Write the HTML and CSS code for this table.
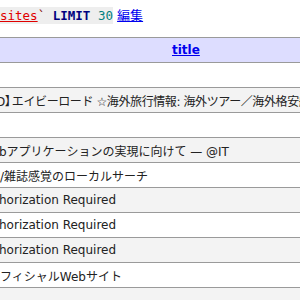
FILE: index.html
```html
<!DOCTYPE html>
<html lang="ja">
<head>
<meta charset="utf-8">
<title>sites</title>
<link rel="stylesheet" href="styles.css">
</head>
<body>
<div class="page">
  <p class="sql"><code class="code"><a class="tbl-name" href="#">sites</a><span class="tick">`</span> <span class="kw">LIMIT</span> <span class="num">30</span></code> <a class="edit" href="#">編集</a></p>
  <div class="grid">
    <div class="row head"><a class="col" href="#">title</a></div>
    <div class="row odd"><span class="cell"></span></div>
    <div class="row even"><span class="cell cut-d">D<span class="bracket">】</span>エイビーロード ☆海外旅行情報: 海外ツアー／海外格安航空券</span></div>
    <div class="row odd"><span class="cell"></span></div>
    <div class="row even"><span class="cell cut-b">bアプリケーションの実現に向けて — @IT</span></div>
    <div class="row odd"><span class="cell">/雑誌感覚のローカルサーチ</span></div>
    <div class="row even"><span class="cell cut-h">horization Required</span></div>
    <div class="row odd"><span class="cell cut-h">horization Required</span></div>
    <div class="row even"><span class="cell cut-h">horization Required</span></div>
    <div class="row odd"><span class="cell cut-f">フィシャルWebサイト</span></div>
    <div class="row even"><span class="cell"></span></div>
  </div>
</div>
</body>
</html>
```
FILE: styles.css
```css
html, body {
  margin: 0;
  padding: 0;
  background: #fff;
}
body {
  font-family: "DejaVu Sans", "Noto Sans CJK JP", sans-serif;
  font-size: 12px;
  color: #222;
  width: 300px;
  height: 300px;
  overflow: hidden;
}
.page {
  padding-top: 8px;
}
.sql {
  margin: 0;
  height: 15px;
  line-height: 15px;
  white-space: nowrap;
  font-size: 13px;
}
.code {
  background: #eeeeee;
  font-family: "DejaVu Sans Mono", "Noto Sans CJK JP", monospace;
  font-size: 12.5px;
  padding: 1px 0;
}
.tbl-name {
  color: #e00000;
  text-decoration: underline;
}
.tick {
  color: #800000;
}
.kw {
  color: #000080;
  font-weight: bold;
}
.num {
  color: #008080;
}
.edit {
  color: #0000ee;
  text-decoration: underline;
}
.grid {
  margin-top: 14px;
}
.row {
  display: flex;
  align-items: center;
  height: 24px;
  border-bottom: 1px solid #9a9a9a;
  white-space: nowrap;
  overflow: hidden;
}
.head {
  border-top: 1px solid #9a9a9a;
  background: #ddddff;
  padding-left: 172px;
}
.col {
  color: #0000ee;
  font-weight: bold;
  text-decoration: underline;
}
.odd {
  background: #ffffff;
}
.even {
  background: #f3f3f3;
}
.cell {
  display: block;
}
.cut-d {
  margin-left: -4px;
  letter-spacing: -0.4px;
}
.bracket {
  letter-spacing: -5px;
}
.cut-b {
  margin-left: -1px;
}
.cut-h {
  margin-left: -1px;
}
.cut-f {
  margin-left: 0;
}
```
